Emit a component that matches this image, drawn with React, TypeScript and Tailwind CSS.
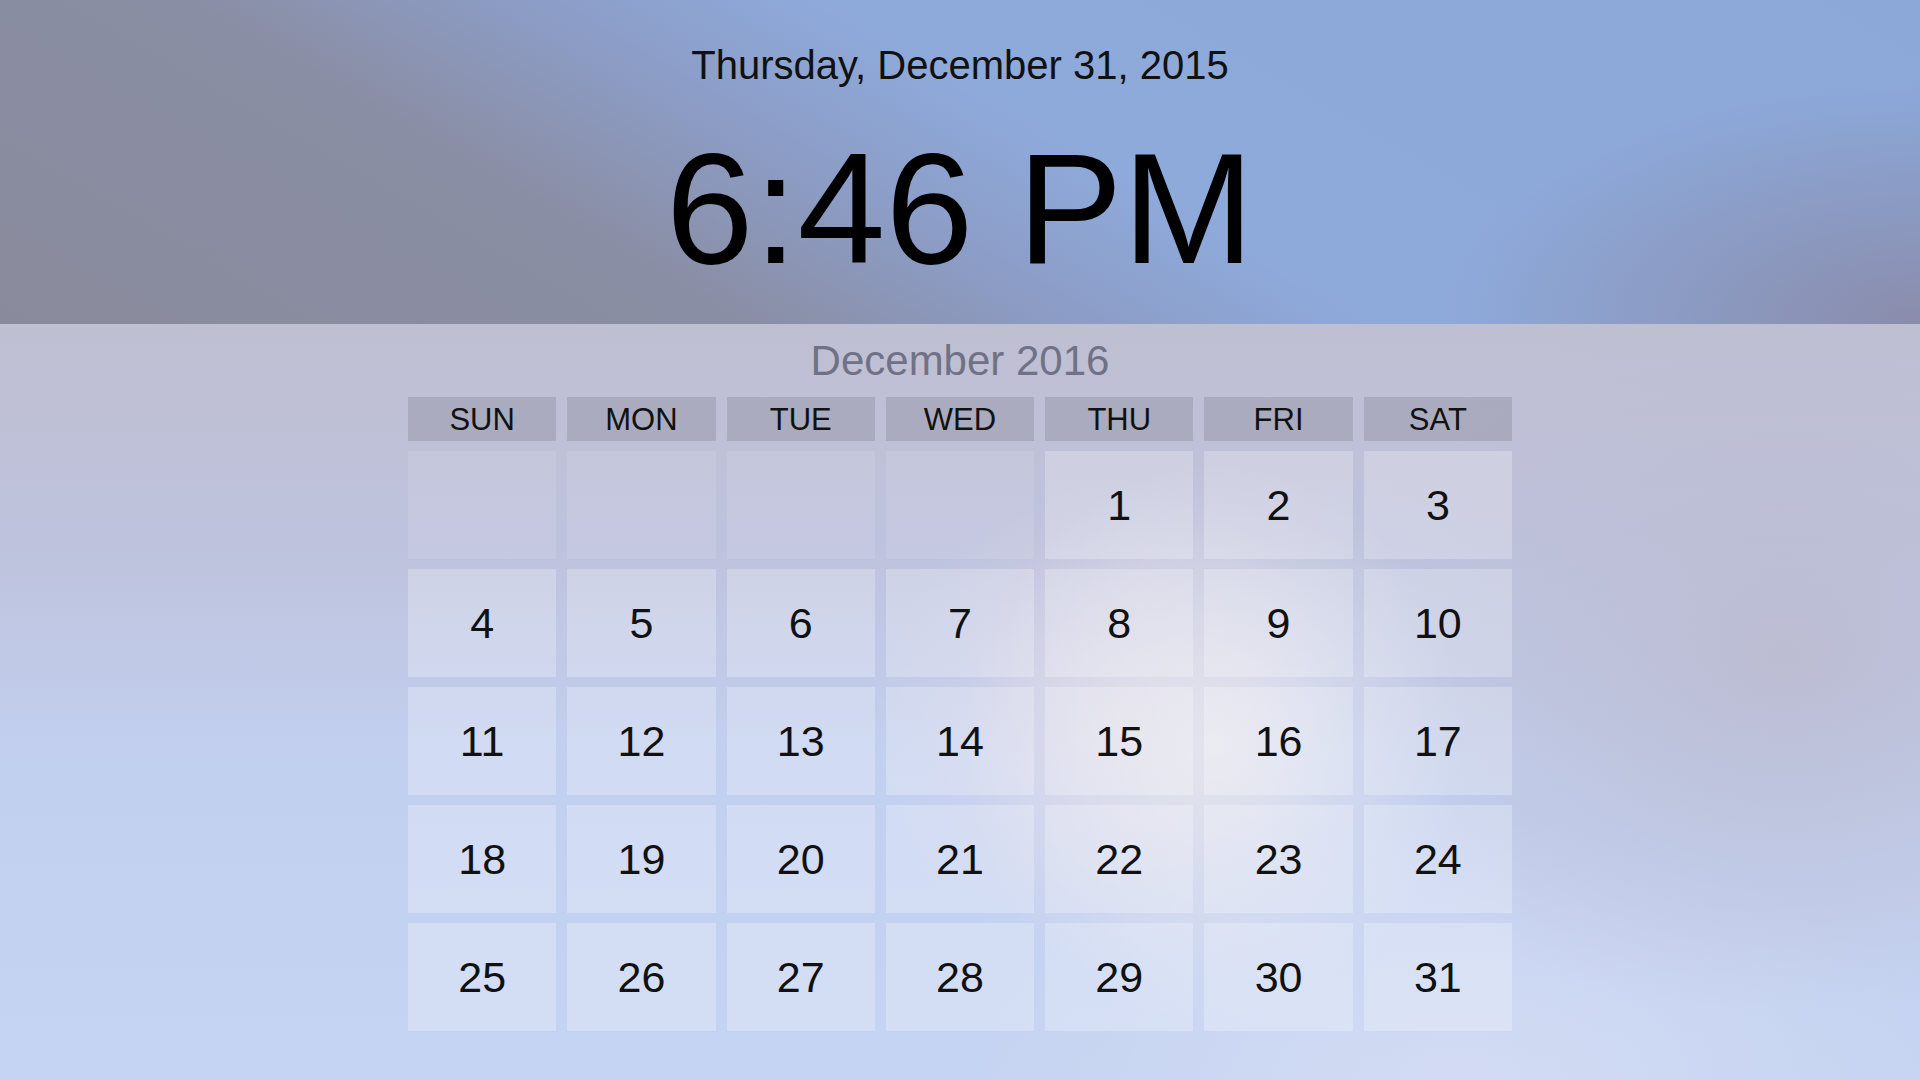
import React from "react";

const WEEKDAYS = ["SUN", "MON", "TUE", "WED", "THU", "FRI", "SAT"];

// December 2016 starts on a Thursday
const LEADING_BLANKS = 4;
const DAYS_IN_MONTH = 31;

export default function App() {
  const cells: (number | null)[] = [
    ...Array.from({ length: LEADING_BLANKS }, () => null),
    ...Array.from({ length: DAYS_IN_MONTH }, (_, i) => i + 1),
  ];

  return (
    <div
      className="w-full h-[1080px] flex flex-col overflow-hidden text-black"
      style={{ fontFamily: '"Liberation Sans", Arial, sans-serif' }}
    >
      {/* Clock header */}
      <div className="h-[324px] shrink-0 flex flex-col items-center pt-[45px] bg-[radial-gradient(ellipse_480px_240px_at_100%_100%,#8a8cab_0%,rgba(138,140,171,0)_100%),linear-gradient(30deg,#898b9c_0%,#8a8ea4_30%,#8c9dc7_44%,#8eaadb_56%,#8ba8d9_100%)]">
        <div className="text-[40px] leading-none text-[#111]">Thursday, December 31, 2015</div>
        <div className="mt-[44px] text-[158px] leading-none">6:46 PM</div>
      </div>

      {/* Calendar */}
      <div className="flex-1 flex flex-col items-center bg-[radial-gradient(ellipse_250px_280px_at_1215px_420px,rgba(236,234,238,0.75)_0%,rgba(236,234,238,0)_100%),radial-gradient(circle_240px_at_1110px_400px,rgba(230,216,226,0.55)_0%,rgba(230,216,226,0)_100%),radial-gradient(ellipse_480px_360px_at_93%_44%,#bcbdd3_0%,rgba(188,189,211,0)_100%),radial-gradient(ellipse_500px_260px_at_76%_100%,rgba(212,220,243,0.9)_0%,rgba(212,220,243,0)_100%),linear-gradient(180deg,#bfbfd2_0%,#bec2dc_28%,#c2d0f0_58%,#c5d4f2_100%)]">
        <div className="mt-[16px] text-[42px] leading-none text-[#6f7286]">December 2016</div>

        <div className="mt-[15px] w-[1104px] grid grid-cols-7 grid-rows-[44px_repeat(5,108px)] gap-x-[11px] gap-y-[10px]">
          {WEEKDAYS.map(d => (
            <div key={d} className="flex items-center justify-center bg-black/[0.11] text-[31px] leading-none text-[#111]">
              {d}
            </div>
          ))}
          {cells.map((n, i) =>
            n === null ? (
              <div key={`b${i}`} className="bg-white/10" />
            ) : (
              <div key={n} className="flex items-center justify-center bg-white/25 text-[43px] leading-none text-[#111]">
                {n}
              </div>
            )
          )}
        </div>
      </div>
    </div>
  );
}
